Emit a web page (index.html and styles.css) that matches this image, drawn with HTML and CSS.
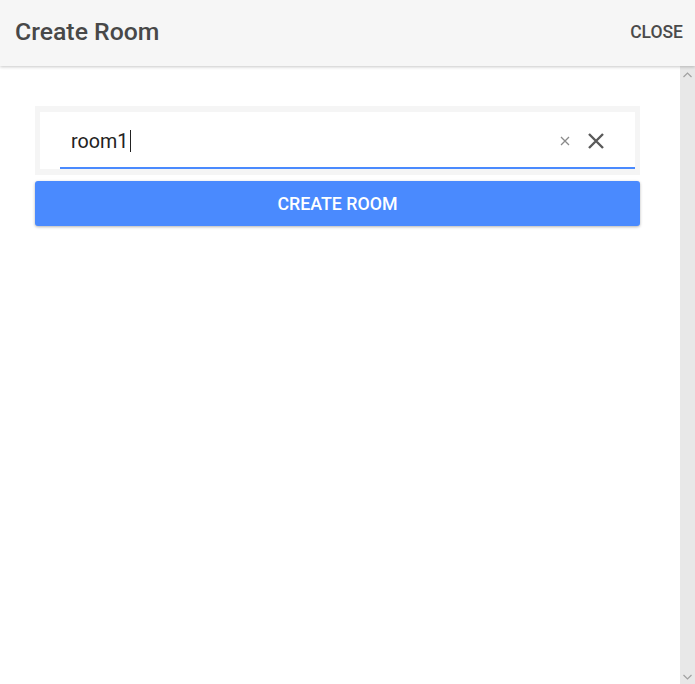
FILE: index.html
```html
<!DOCTYPE html>
<html>
<head>
<meta charset="utf-8">
<link rel="stylesheet" href="styles.css">
</head>
<body>
<header class="header">
  <h1 class="title">Create Room</h1>
  <span class="close">CLOSE</span>
</header>
<div class="main">
  <div class="content">
    <div class="card">
      <div class="field">
        <div class="value">room1<span class="caret"></span></div>
        <svg class="x-small" width="10" height="10" viewBox="0 0 10 10"><path d="M1 1L9 9M9 1L1 9" stroke="#8a8a8a" stroke-width="1.3"/></svg>
        <svg class="x-big" width="18" height="18" viewBox="0 0 18 18"><path d="M2 2L16 16M16 2L2 16" stroke="#5a5a5a" stroke-width="2.4"/></svg>
      </div>
    </div>
    <button class="create">CREATE ROOM</button>
  </div>
  <div class="scrollbar">
    <svg width="15" height="14" viewBox="0 0 15 14"><path d="M3.5 9L7.5 5L11.5 9" fill="none" stroke="#a0a0a0" stroke-width="1.2"/></svg>
    <svg width="15" height="14" viewBox="0 0 15 14"><path d="M3.5 5L7.5 9L11.5 5" fill="none" stroke="#a0a0a0" stroke-width="1.2"/></svg>
  </div>
</div>
</body>
</html>
```

FILE: styles.css
```css
html, body {
  margin: 0;
  padding: 0;
  height: 100%;
}
body {
  font-family: Roboto, "Liberation Sans", sans-serif;
  background: #fff;
  display: flex;
  flex-direction: column;
  overflow: hidden;
}
.header {
  height: 66px;
  flex: none;
  background: #f6f6f6;
  display: flex;
  align-items: center;
  justify-content: space-between;
  padding: 0 12px 3px 15px;
  box-sizing: border-box;
  box-shadow: 0 1px 3px rgba(0,0,0,0.22);
  position: relative;
  z-index: 1;
}
.title {
  margin: 0;
  font-size: 24.8px;
  font-weight: 500;
  color: #484848;
}
.close {
  font-size: 17.5px;
  font-weight: 500;
  color: #4a4a4a;
}
.main {
  flex: 1;
  display: flex;
  min-height: 0;
}
.content {
  flex: 1;
  padding: 40px 40px 0 35px;
}
.card {
  background: #fff;
  border: 5px solid #f5f5f5;
  border-top-width: 6px;
  border-bottom-width: 6px;
}
.field {
  height: 57px;
  margin-left: 20px;
  border-bottom: 2px solid #4a8afe;
  box-sizing: border-box;
  display: flex;
  align-items: center;
  padding-left: 11px;
  padding-right: 30px;
}
.value {
  flex: 1;
  font-size: 19.7px;
  color: #222;
  display: flex;
  align-items: center;
  margin-top: 3px;
}
.caret {
  display: inline-block;
  width: 1px;
  height: 22px;
  background: #222;
  margin-left: 2px;
}
.x-small {
  margin-right: 17px;
  margin-top: 2px;
}
.x-big {
  margin-top: 2px;
}
.create {
  display: block;
  width: 100%;
  height: 45px;
  margin-top: 6px;
  border: none;
  border-radius: 3px;
  background: #4a8afe;
  color: #fff;
  font-family: Roboto, "Liberation Sans", sans-serif;
  font-size: 17.8px;
  font-weight: 500;
  box-shadow: 0 1px 3px rgba(0,0,0,0.3);
  padding: 0;
}
.scrollbar {
  width: 15px;
  flex: none;
  background: #e8e8e8;
  display: flex;
  flex-direction: column;
  justify-content: space-between;
  padding: 2px 0 0;
}
```
